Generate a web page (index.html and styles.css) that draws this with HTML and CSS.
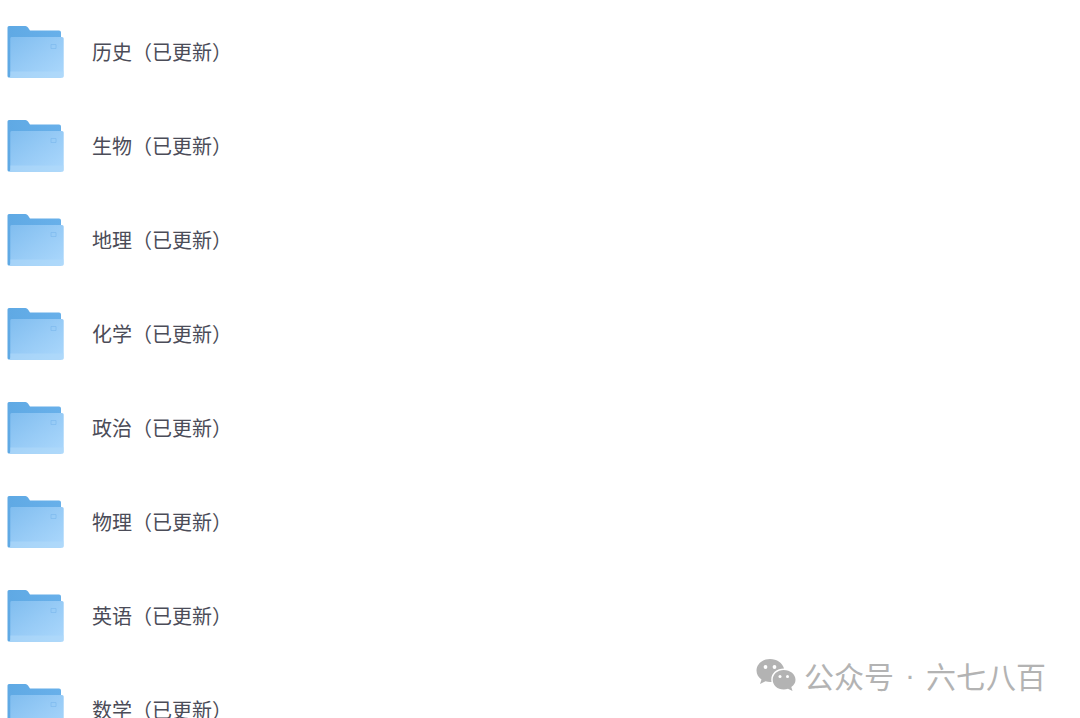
FILE: index.html
```html
<!DOCTYPE html>
<html lang="zh-CN">
<head>
<meta charset="utf-8">
<meta name="viewport" content="width=device-width, initial-scale=1">
<title>文件列表</title>
<link rel="stylesheet" href="styles.css">
</head>
<body>
<svg class="defs" aria-hidden="true">
  <defs>
    <linearGradient id="front" x1="0" y1="0" x2="1" y2="1">
      <stop offset="0" stop-color="#80bdef"/>
      <stop offset="0.5" stop-color="#97cbf6"/>
      <stop offset="1" stop-color="#acd8fc"/>
    </linearGradient>
    <linearGradient id="back" x1="0" y1="0" x2="1" y2="0">
      <stop offset="0" stop-color="#5fa9e4"/>
      <stop offset="1" stop-color="#68b0ea"/>
    </linearGradient>
    <symbol id="folder" viewBox="0 0 58 52">
      <path fill="url(#back)" d="M2 0H18.500Q20 0 21 1.500L23 4.500H52Q54 4.500 54 6.500V51.500H2Q.5 51.500 .5 50V1.500Q.5 0 2 0Z"/>
      <path fill="url(#front)" d="M4.500 11H55Q56.700 11 56.700 12.500V50Q56.700 51.700 55 51.700H2.500Q3.300 51 3.300 49V12.500Q3.300 11 4.500 11Z"/>
      <path fill="#b2dafa" opacity=".55" d="M3.300 45.500H56.700V50Q56.700 51.700 55 51.700H2.500Q3.300 51 3.300 49Z"/>
      <path fill="none" stroke="#79b7ec" opacity=".6" d="M44 18.500H49V22.500H44Z"/>
    </symbol>
  </defs>
</svg>
<main class="files">
  <ul class="file-list">
    <li class="file"><svg class="folder" aria-hidden="true"><use href="#folder"/></svg><span>历史（已更新）</span></li>
    <li class="file"><svg class="folder" aria-hidden="true"><use href="#folder"/></svg><span>生物（已更新）</span></li>
    <li class="file"><svg class="folder" aria-hidden="true"><use href="#folder"/></svg><span>地理（已更新）</span></li>
    <li class="file"><svg class="folder" aria-hidden="true"><use href="#folder"/></svg><span>化学（已更新）</span></li>
    <li class="file"><svg class="folder" aria-hidden="true"><use href="#folder"/></svg><span>政治（已更新）</span></li>
    <li class="file"><svg class="folder" aria-hidden="true"><use href="#folder"/></svg><span>物理（已更新）</span></li>
    <li class="file"><svg class="folder" aria-hidden="true"><use href="#folder"/></svg><span>英语（已更新）</span></li>
    <li class="file"><svg class="folder" aria-hidden="true"><use href="#folder"/></svg><span>数学（已更新）</span></li>
  </ul>
  <div class="watermark">
    <svg class="wechat" viewBox="0 0 40 34" aria-hidden="true">
      <path fill="#b3b3b3" d="M14 1C6.300 1 .5 6 .5 12.500C.5 16.500 2.500 19.500 5.500 21.500L4 26L9.500 23.300C11.500 23.900 13.500 24 15.500 23.900C14 16 20 10.500 28 10.500C26.500 5 21 1 14 1Z"/>
      <path fill="#b3b3b3" d="M27.700 12C21.500 12 16.700 16.300 16.700 21.700C16.700 27.200 21.500 31.500 27.700 31.500C29.300 31.500 30.700 31.200 32 30.800L36.500 33L35.300 29C38 27.200 39.500 24.700 39.500 21.700C39.500 16.300 34.300 12 27.700 12Z"/>
      <g fill="#fff"><circle cx="9.500" cy="9" r="1.900"/><circle cx="18.500" cy="9" r="1.900"/><circle cx="24" cy="18.500" r="1.500"/><circle cx="31.500" cy="18.500" r="1.500"/></g>
    </svg>
    <span>公众号</span><span class="dot">·</span><span>六七八百</span>
  </div>
</main>
</body>
</html>
```
FILE: styles.css
```css
body {
  margin: 0;
  background: #fff;
  color: #4b4c58;
  font-family: "Noto Sans CJK SC", sans-serif;
}

.defs {
  position: absolute;
  width: 0;
  height: 0;
}

.files {
  position: relative;
  height: 100vh;
  overflow: hidden;
}

.file-list {
  margin: 0;
  padding: 5px 0 0 7px;
  list-style: none;
}

.file {
  display: flex;
  align-items: center;
  gap: 27px;
  height: 94px;
  font-size: 20px;
  line-height: 28px;
}

.folder {
  flex: none;
  width: 58px;
  height: 52px;
}

.watermark {
  position: absolute;
  right: 34px;
  bottom: 22px;
  display: flex;
  align-items: center;
  color: #b3b3b3;
  font-size: 30px;
  line-height: 42px;
}

.wechat {
  width: 40px;
  height: 34px;
  margin-right: 8px;
}

.dot {
  width: 32px;
  font-family: "Liberation Sans", sans-serif;
  text-align: center;
}
```
